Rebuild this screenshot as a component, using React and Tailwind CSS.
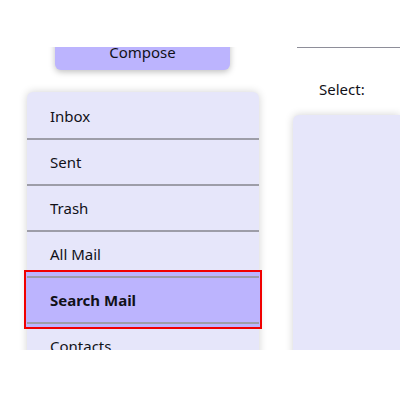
const folders = ["Inbox", "Sent", "Trash", "All Mail", "Search Mail", "Contacts"];
const selected = "Search Mail";

export default function App() {
  return (
    <div className="h-[400px] w-[400px] overflow-hidden bg-white text-[15px] text-[#111118] [font-family:'Noto_Sans',sans-serif]">
      <div className="mt-[47px] flex h-[303px] overflow-hidden">
        {/* Left column */}
        <div className="w-[259px] shrink-0 pl-[27px]">
          <button className="-mt-[13px] ml-[28px] flex h-[36px] w-[175px] items-center justify-center rounded-md bg-[#bcb4fe] pt-[1px] shadow-[0_2px_6px_rgba(0,0,0,0.25)]">
            Compose
          </button>

          <div className="mt-[22px] rounded-t-md bg-[#e6e6fa] pt-[2px] shadow-[0_0_8px_rgba(0,0,0,0.18)]">
            {folders.map((name, i) => {
              const active = name === selected;
              return (
                <div key={name}>
                  {i > 0 && <div className="relative z-10 h-[2px] bg-[#9d9da8]" />}
                  <div className="relative flex h-[44px] items-center pl-[23px]">
                    {active && (
                      <div className="absolute -inset-x-[3px] -top-[8px] -bottom-[7px] border-2 border-[#f00000] bg-[#bcb4fe]" />
                    )}
                    <span className={active ? "relative z-10 font-bold" : "relative z-10"}>{name}</span>
                  </div>
                </div>
              );
            })}
          </div>
        </div>

        {/* Right column */}
        <div className="flex-1 pl-[34px]">
          <div className="ml-[4px] h-px bg-[#8e8e99]" />
          <p className="mt-[31px] pl-[26px] leading-5">Select:</p>
          <div className="mt-[16px] h-[400px] rounded-tl-md bg-[#e6e6fa] shadow-[0_0_8px_rgba(0,0,0,0.18)]" />
        </div>
      </div>
    </div>
  );
}
